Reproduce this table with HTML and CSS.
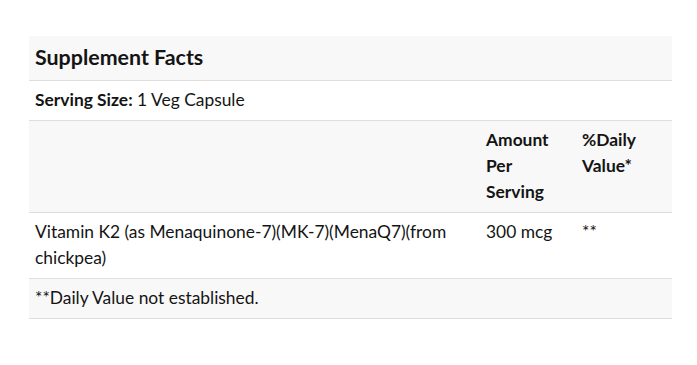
FILE: index.html
```html
<!DOCTYPE html>
<html lang="en">
<head>
  <meta charset="UTF-8" />
  <meta name="viewport" content="width=device-width, initial-scale=1.0"/>
  <title>Supplement Facts</title>
  <link rel="stylesheet" href="styles.css">
</head>
<body>
  <table class="facts">
    <colgroup>
      <col class="col-name">
      <col class="col-amount">
      <col class="col-dv">
    </colgroup>
    <thead>
      <tr class="striped">
        <th colspan="3" class="facts-title">Supplement Facts</th>
      </tr>
    </thead>
    <tbody>
      <tr>
        <td colspan="3"><strong>Serving Size:</strong> 1 Veg Capsule</td>
      </tr>
      <tr class="striped">
        <td></td>
        <td><strong>Amount Per Serving</strong></td>
        <td><strong>%Daily Value*</strong></td>
      </tr>
      <tr>
        <td>Vitamin K2 (as Menaquinone-7)(MK-7)(MenaQ7)(from chickpea)</td>
        <td>300 mcg</td>
        <td>**</td>
      </tr>
      <tr class="striped">
        <td colspan="3">**Daily Value not established.</td>
      </tr>
    </tbody>
  </table>
</body>
</html>
```

FILE: styles.css
```css
* { box-sizing: border-box; }
body {
  margin: 0;
  padding: 36px 25px 0 29px;
  font-family: Lato, sans-serif;
  font-size: 17.4px;
  color: #141414;
  background: #fff;
}
.facts {
  width: 643px;
  border-collapse: collapse;
  table-layout: fixed;
}
.facts th,
.facts td {
  padding: 6px 6px 7px;
  line-height: 26px;
  text-align: left;
  vertical-align: top;
  border-bottom: 1px solid #dedede;
}
.facts .facts-title {
  font-size: 21.4px;
  font-weight: 700;
  line-height: 31px;
}
.striped { background: #f8f8f8; }
.col-name { width: 451px; }
.col-amount { width: 96px; }
.col-dv { width: 96px; }
strong { font-weight: 700; }
```
